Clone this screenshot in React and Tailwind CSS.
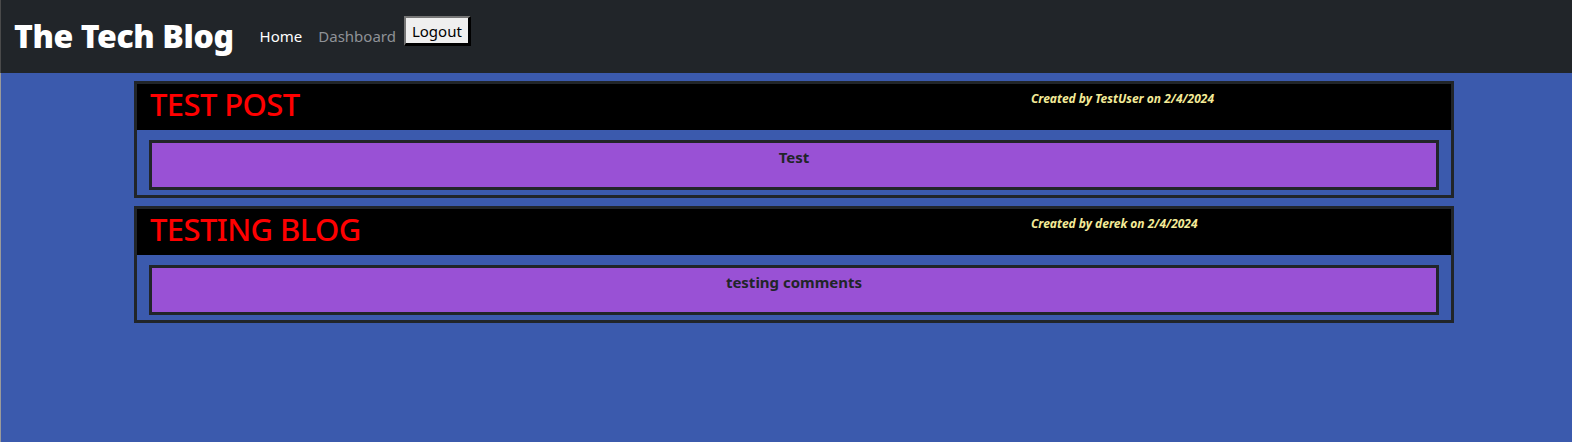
const posts = [
  { title: 'TEST POST', author: 'TestUser', date: '2/4/2024', body: 'Test' },
  { title: 'TESTING BLOG', author: 'derek', date: '2/4/2024', body: 'testing comments' },
]

function PostCard({ post }) {
  return (
    <div className="border-[3px] border-[#212529] mb-[8px]">
      {/* Title bar */}
      <div className="bg-black h-[46px] flex">
        <h2
          className="flex-1 pl-[13px] pt-[1px] text-[31px] leading-[38px] font-medium tracking-[-0.6px] text-[#ff0000]"
          style={{ fontFamily: '"Noto Sans", sans-serif' }}
        >
          {post.title}
        </h2>
        <div
          className="w-[420px] pt-[6px] text-[12px] font-bold italic text-[#f4eb98]"
          style={{ fontFamily: '"Noto Sans", sans-serif' }}
        >
          Created by {post.author} on {post.date}
        </div>
      </div>
      {/* Body */}
      <div className="px-[12px] pt-[10px] pb-[5px]">
        <div className="border-[3px] border-[#212529] bg-[#9951d5] h-[50px]">
          <p
            className="text-center pt-[2px] text-[15px] leading-[24px] font-bold text-[#212529]"
            style={{ fontFamily: '"Noto Sans", sans-serif' }}
          >
            {post.body}
          </p>
        </div>
      </div>
    </div>
  )
}

export default function App() {
  return (
    <div className="w-[1572px] h-[442px] flex flex-col bg-[#3b5aad] overflow-hidden" style={{ fontFamily: '"Noto Sans", sans-serif' }}>
      {/* Navbar */}
      <header className="h-[73px] bg-[#212529] flex items-start pl-[13px] border-l border-[#4a4a4a] flex-shrink-0">
        <h1 className="mt-[16px] text-[32px] leading-[40px] font-black text-white tracking-[-0.4px]">
          The Tech Blog
        </h1>
        <nav className="flex items-start ml-[18px]">
          <a className="mt-[26px] px-[8px] text-[15px] leading-[20px] text-white">Home</a>
          <a className="mt-[26px] px-[8px] text-[15px] leading-[20px] text-[#8f9297]">Dashboard</a>
          <button className="mt-[16px] h-[30px] px-[6px] bg-[#efefef] text-black text-[15px] leading-[22px] border-t-2 border-l-2 border-r-[3px] border-b-[3px] border-t-[#767676] border-l-[#767676] border-r-black border-b-black">
            Logout
          </button>
        </nav>
      </header>

      {/* Posts */}
      <main className="flex-1 border-l border-[#9a9a9a] pt-[8px]">
        <div className="ml-[133px] w-[1320px]">
          {posts.map((p, i) => (
            <PostCard key={i} post={p} />
          ))}
        </div>
      </main>
    </div>
  )
}
